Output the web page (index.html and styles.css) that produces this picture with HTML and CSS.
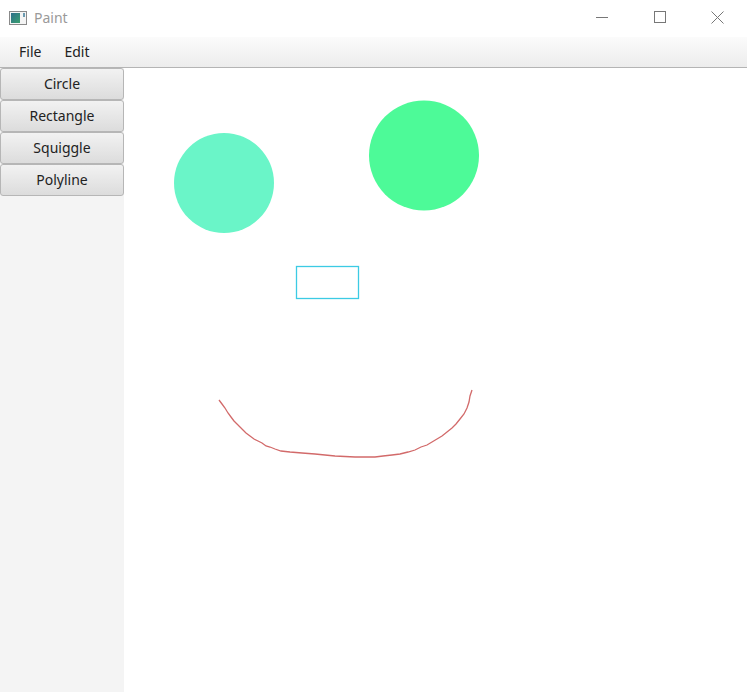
FILE: index.html
```html
<!DOCTYPE html>
<html>
<head>
<meta charset="utf-8">
<link rel="stylesheet" href="styles.css">
</head>
<body>
<div class="window">
  <div class="titlebar">
    <svg class="app-icon" width="18" height="14" viewBox="0 0 18 14">
      <rect x="0.5" y="0.5" width="17" height="13" fill="#f4f4f4" stroke="#8a8a8a"/>
      <defs><linearGradient id="g" x1="0" y1="0" x2="1" y2="1"><stop offset="0" stop-color="#2e6e8a"/><stop offset="1" stop-color="#3aa070"/></linearGradient></defs>
      <rect x="2" y="2" width="9" height="10" fill="url(#g)"/>
      <rect x="14" y="2" width="2" height="4" fill="#6a9ab0"/>
    </svg>
    <span class="title">Paint</span>
    <div class="controls">
      <svg class="ctl" width="58" height="34" viewBox="0 0 58 34"><line x1="23" y1="17.5" x2="35" y2="17.5" stroke="#777" stroke-width="1"/></svg>
      <svg class="ctl" width="58" height="34" viewBox="0 0 58 34"><rect x="23.5" y="11.5" width="11" height="11" fill="none" stroke="#777" stroke-width="1"/></svg>
      <svg class="ctl" width="58" height="34" viewBox="0 0 58 34"><path d="M22.5 11.5 L34.5 23.5 M34.5 11.5 L22.5 23.5" stroke="#777" stroke-width="1"/></svg>
    </div>
  </div>
  <div class="menubar">
    <span class="menu">File</span>
    <span class="menu">Edit</span>
  </div>
  <div class="main">
    <div class="sidebar">
      <button class="tool">Circle</button>
      <button class="tool">Rectangle</button>
      <button class="tool">Squiggle</button>
      <button class="tool">Polyline</button>
    </div>
    <div class="canvas">
      <svg width="623" height="624" viewBox="124 68 623 624">
        <circle cx="224" cy="183" r="50" fill="#6af5c8"/>
        <circle cx="424" cy="155.5" r="55" fill="#4dfa98"/>
        <rect x="296.5" y="266.5" width="62" height="32" fill="none" stroke="#3ccbe4" stroke-width="1.3"/>
        <polyline fill="none" stroke="#d26a6a" stroke-width="1.3" points="219,400 222,404 225,408 228,413 231,417 234,421 237,424 240,427 243,430 246,433 250,436 254,439 258,441 262,443 266,446 270,447 275,449 281,451 290,452 302,453 315,454 325,455 335,456 345,456.5 355,457 365,457 375,457 383,456 392,455 400,454 408,452 415,450 421,447 427,445 432,442 437,439 442,436 447,432 452,428 456,424 460,419 464,414 467,408 469,402 470,396 472,390"/>
      </svg>
    </div>
  </div>
</div>
</body>
</html>
```

FILE: styles.css
```css
* { box-sizing: border-box; }
html, body { margin: 0; padding: 0; }
body {
  width: 747px;
  height: 692px;
  overflow: hidden;
  background: #fff;
  font-family: "Noto Sans", "Open Sans", sans-serif;
}
.window {
  display: flex;
  flex-direction: column;
  height: 692px;
}
.titlebar {
  height: 37px;
  display: flex;
  align-items: center;
  background: #fff;
  padding-left: 9px;
}
.app-icon { display: block; margin-top: -2px; }
.title {
  margin-left: 7px;
  font-size: 14px;
  color: #9a9a9a;
  margin-top: -2px;
}
.controls {
  margin-left: auto;
  display: flex;
  align-self: flex-start;
}
.ctl { display: block; }
.menubar {
  height: 31px;
  display: flex;
  align-items: center;
  padding-left: 19px;
  gap: 23px;
  background: linear-gradient(#fbfbfb, #ececec);
  border-bottom: 1px solid #b4b4b4;
}
.menu {
  font-size: 14px;
  color: #222;
  margin-top: -1px;
}
.main {
  flex: 1;
  display: flex;
  min-height: 0;
}
.sidebar {
  width: 124px;
  background: #f4f4f4;
  display: flex;
  flex-direction: column;
}
.tool {
  height: 32px;
  width: 124px;
  margin: 0;
  font-family: "Noto Sans", "Open Sans", sans-serif;
  font-size: 14px;
  color: #222;
  background: linear-gradient(#f2f2f2, #dcdcdc);
  border: 1px solid #b6b6b6;
  border-radius: 3px;
  padding: 0 0 2px 0;
}
.canvas {
  flex: 1;
  background: #fff;
}
.canvas svg { display: block; }
```
